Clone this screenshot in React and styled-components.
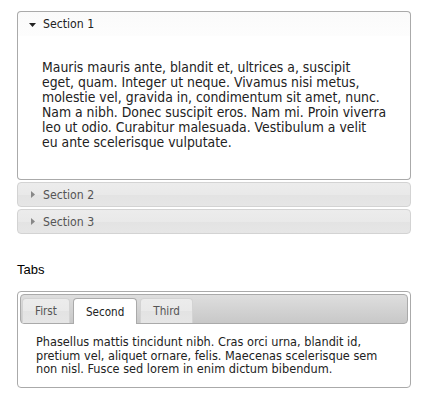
import React from "react";
import styled, { createGlobalStyle } from "styled-components";

const Global = createGlobalStyle`
  html, body { margin: 0; padding: 0; background: #fff; }
  body { font-family: "DejaVu Sans Condensed", "Liberation Sans", sans-serif; }
`;

const Page = styled.div`
  width: 394px;
  padding: 11px 0 0 17px;
`;

const Accordion = styled.div`
  display: flex;
  flex-direction: column;
`;

const Header = styled.div`
  box-sizing: border-box;
  height: 25px;
  display: flex;
  align-items: center;
  gap: 7px;
  padding-left: 11px;
  margin-top: ${(p) => (p.$first ? 0 : "2px")};
  font-size: 12.2px;
  color: ${(p) => (p.$active ? "#222" : "#555")};
  border: 1px solid ${(p) => (p.$active ? "#aaa" : "#d3d3d3")};
  border-bottom: ${(p) => (p.$active ? "none" : "1px solid #d3d3d3")};
  border-radius: ${(p) => (p.$active ? "4px 4px 0 0" : "4px")};
  background: ${(p) =>
    p.$active
      ? "linear-gradient(#fafafa, #fdfdfd)"
      : "linear-gradient(#ececec 0%, #e9e9e9 50%, #e3e3e3 52%, #e6e6e6 100%)"};
`;

const Arrow = styled.svg`
  width: 7px;
  height: 7px;
  flex: none;
`;

const Content = styled.div`
  border: 1px solid #aaa;
  border-top: none;
  border-radius: 0 0 4px 4px;
  background: #fff;
  padding: 24px 24px 29px 24px;
  font-size: 13.85px;
  line-height: 15px;
  color: #222;
`;

const Line = styled.span`
  display: block;
  white-space: nowrap;
`;

const Title = styled.div`
  margin-top: 28px;
  font-family: "Liberation Sans", Arial, sans-serif;
  font-size: 13px;
  color: #000;
  line-height: 16px;
`;

const Tabs = styled.div`
  margin-top: 13px;
  border: 1px solid #aaa;
  border-radius: 4px;
  padding: 2px;
  background: #fff;
`;

const Nav = styled.div`
  box-sizing: border-box;
  height: 30px;
  display: flex;
  align-items: flex-end;
  gap: 3px;
  padding: 0 1px;
  border: 1px solid #aaa;
  border-radius: 4px;
  background: linear-gradient(#dedede, #c8c8c8);
`;

const Tab = styled.div`
  box-sizing: border-box;
  height: ${(p) => (p.$active ? "26px" : "25px")};
  margin-bottom: ${(p) => (p.$active ? "-1px" : "0")};
  padding: 0 12px;
  display: flex;
  align-items: center;
  font-size: 11.6px;
  color: ${(p) => (p.$active ? "#212121" : "#555")};
  border: 1px solid ${(p) => (p.$active ? "#aaa" : "#d3d3d3")};
  border-bottom: none;
  border-radius: 4px 4px 0 0;
  background: ${(p) =>
    p.$active
      ? "#fff"
      : "linear-gradient(#ececec 0%, #e9e9e9 50%, #e3e3e3 52%, #e6e6e6 100%)"};
`;

const Panel = styled.div`
  padding: 11px 17px 9px 16px;
  font-size: 12.6px;
  line-height: 13.5px;
  color: #222;
`;

const Down = () => (
  <Arrow viewBox="0 0 7 7">
    <path d="M0 2 H7 L3.5 6 Z" fill="#222" />
  </Arrow>
);

const Right = () => (
  <Arrow viewBox="0 0 7 7">
    <path d="M2 0 V7 L6 3.5 Z" fill="#888" />
  </Arrow>
);

export default function App() {
  return (
    <>
      <Global />
      <Page>
        <Accordion>
          <Header $active $first>
            <Down />
            Section 1
          </Header>
          <Content>
            <Line>Mauris mauris ante, blandit et, ultrices a, suscipit</Line>
            <Line>eget, quam. Integer ut neque. Vivamus nisi metus,</Line>
            <Line>molestie vel, gravida in, condimentum sit amet, nunc.</Line>
            <Line>Nam a nibh. Donec suscipit eros. Nam mi. Proin viverra</Line>
            <Line>leo ut odio. Curabitur malesuada. Vestibulum a velit</Line>
            <Line>eu ante scelerisque vulputate.</Line>
          </Content>
          <Header>
            <Right />
            Section 2
          </Header>
          <Header>
            <Right />
            Section 3
          </Header>
        </Accordion>
        <Title>Tabs</Title>
        <Tabs>
          <Nav>
            <Tab>First</Tab>
            <Tab $active>Second</Tab>
            <Tab>Third</Tab>
          </Nav>
          <Panel>
            <Line>Phasellus mattis tincidunt nibh. Cras orci urna, blandit id,</Line>
            <Line>pretium vel, aliquet ornare, felis. Maecenas scelerisque sem</Line>
            <Line>non nisl. Fusce sed lorem in enim dictum bibendum.</Line>
          </Panel>
        </Tabs>
      </Page>
    </>
  );
}
